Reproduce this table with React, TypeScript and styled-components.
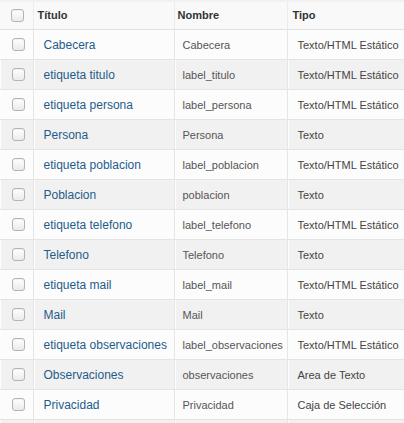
import React from "react";
import styled, { createGlobalStyle } from "styled-components";

const Global = createGlobalStyle`
  html, body { margin: 0; padding: 0; background: #fff; overflow: hidden; }
  body { font-family: "Liberation Sans", Arial, Helvetica, sans-serif; }
`;

const Wrap = styled.div`
  width: 404px;
  height: 423px;
  overflow: hidden;
  background: #f9f9f9;
`;

const Table = styled.table`
  border-collapse: collapse;
  table-layout: fixed;
  width: 440px;
`;

const HeadCell = styled.th<{ $w?: number; $pl?: number }>`
  width: ${(p) => (p.$w ? `${p.$w}px` : "auto")};
  height: 28px;
  padding: 0 0 0 ${(p) => p.$pl ?? 4}px;
  box-sizing: border-box;
  text-align: left;
  font-size: 11px;
  font-weight: bold;
  color: #333;
  background: #f9f9f9;
  border-bottom: 1px solid #e1e1e1;
  border-right: 1px solid #ececec;
  border-top: 2px solid #f1f1f1;
  vertical-align: middle;
`;

const Row = styled.tr<{ $alt: boolean }>`
  background: ${(p) => (p.$alt ? "#f1f1f1" : "#fcfcfc")};
`;

const Cell = styled.td<{ $pl?: number }>`
  height: 30px;
  padding: 0 0 0 ${(p) => p.$pl ?? 8}px;
  box-sizing: border-box;
  border-bottom: 1px solid #e4e4e4;
  border-right: 1px solid #e6e6e6;
  box-shadow: inset 1px 0 0 #fdfdfd;
  vertical-align: middle;
  white-space: nowrap;
  overflow: hidden;
`;

const CheckCell = styled(Cell)`
  padding: 0 0 0 12px;
`;

const Box = styled.span`
  display: block;
  width: 11px;
  height: 11px;
  border: 1px solid #b4b4b4;
  border-radius: 3px;
  background: linear-gradient(#ffffff, #ebebeb);
  box-shadow: inset 0 1px 1px rgba(0, 0, 0, 0.06);
`;

const TitleLink = styled.a`
  font-size: 12px;
  color: #1f5c8b;
  text-decoration: none;
`;

const NameText = styled.span`
  font-size: 11px;
  color: #555;
`;

const TypeText = styled.span`
  font-size: 11px;
  color: #444;
`;

const rows: [string, string, string][] = [
  ["Cabecera", "Cabecera", "Texto/HTML Estático"],
  ["etiqueta titulo", "label_titulo", "Texto/HTML Estático"],
  ["etiqueta persona", "label_persona", "Texto/HTML Estático"],
  ["Persona", "Persona", "Texto"],
  ["etiqueta poblacion", "label_poblacion", "Texto/HTML Estático"],
  ["Poblacion", "poblacion", "Texto"],
  ["etiqueta telefono", "label_telefono", "Texto/HTML Estático"],
  ["Telefono", "Telefono", "Texto"],
  ["etiqueta mail", "label_mail", "Texto/HTML Estático"],
  ["Mail", "Mail", "Texto"],
  ["etiqueta observaciones", "label_observaciones", "Texto/HTML Estático"],
  ["Observaciones", "observaciones", "Area de Texto"],
  ["Privacidad", "Privacidad", "Caja de Selección"],
  ["", "", ""],
];

export default function App() {
  return (
    <Wrap>
      <Global />
      <Table>
        <thead>
          <tr>
            <HeadCell $w={33} $pl={11}>
              <Box />
            </HeadCell>
            <HeadCell $w={141} $pl={4}>Título</HeadCell>
            <HeadCell $w={113} $pl={3}>Nombre</HeadCell>
            <HeadCell $pl={5}>Tipo</HeadCell>
          </tr>
        </thead>
        <tbody>
          {rows.map(([t, n, ty], i) => (
            <Row key={i} $alt={i % 2 === 1}>
              <CheckCell>
                <Box />
              </CheckCell>
              <Cell $pl={10}>
                <TitleLink href="#">{t}</TitleLink>
              </Cell>
              <Cell $pl={8}>
                <NameText>{n}</NameText>
              </Cell>
              <Cell $pl={10}>
                <TypeText>{ty}</TypeText>
              </Cell>
            </Row>
          ))}
        </tbody>
      </Table>
    </Wrap>
  );
}
